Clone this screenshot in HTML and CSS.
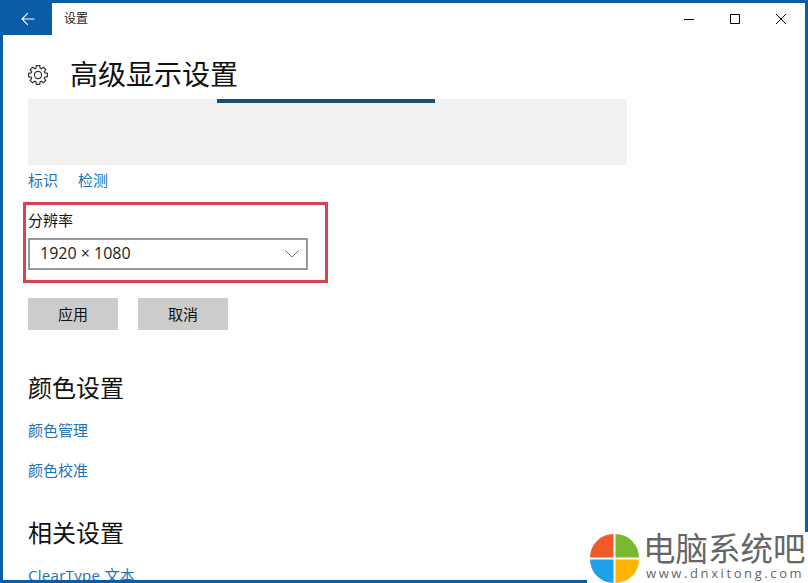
FILE: index.html
```html
<!DOCTYPE html>
<html lang="zh-CN">
<head>
    <meta charset="UTF-8">
    <title>设置</title>
    <link rel="stylesheet" href="styles.css">
</head>
<body>
    <div class="window">
        <div class="titlebar">
            <div class="back">
                <svg width="14" height="14" viewBox="0 0 14 14" fill="none" stroke="#fff" stroke-width="1.1"><path d="M1 7H13.5M6.8 1.2 1 7l5.8 5.8"/></svg>
            </div>
            <div class="title">设置</div>
            <div class="controls">
                <svg width="12" height="12" viewBox="0 0 12 12" fill="none" stroke="#000"><path d="M1 6.5H11"/></svg>
                <svg width="12" height="12" viewBox="0 0 12 12" fill="none" stroke="#000"><path d="M1.5 1.5H10.5V10.5H1.5Z"/></svg>
                <svg width="12" height="12" viewBox="0 0 12 12" fill="none" stroke="#000"><path d="M1 1 11 11M11 1 1 11"/></svg>
            </div>
        </div>
        <div class="content">
            <div class="page-head">
                <svg class="gear" width="20" height="20" viewBox="0 0 20 20" fill="none" stroke="#333" stroke-width="1.2">
                    <polygon points="7.84,3.34 8.35,.65 11.65,.65 12.16,3.34 13.18,3.76 15.45,2.22 17.78,4.55 16.24,6.82 16.66,7.84 19.35,8.35 19.35,11.65 16.66,12.16 16.24,13.18 17.78,15.45 15.45,17.78 13.18,16.24 12.16,16.66 11.65,19.35 8.35,19.35 7.84,16.66 6.82,16.24 4.55,17.78 2.22,15.45 3.76,13.18 3.34,12.16 .65,11.65 .65,8.35 3.34,7.84 3.76,6.82 2.22,4.55 4.55,2.22 6.82,3.76"/>
                    <circle cx="10" cy="10" r="3.6"/>
                </svg>
                <h1>高级显示设置</h1>
            </div>
            <div class="preview"><div class="monitor"></div></div>
            <div class="link-row">
                <a>标识</a>
                <a>检测</a>
            </div>
            <div class="resolution">
                <label>分辨率</label>
                <div class="select">
                    <span class="select-value">1920 × 1080</span>
                    <svg width="14" height="8" viewBox="0 0 14 8" fill="none" stroke="#777"><path d="M.5.5 7 7 13.5.5"/></svg>
                </div>
                <div class="highlight"></div>
            </div>
            <div class="buttons">
                <button>应用</button>
                <button>取消</button>
            </div>
            <h2>颜色设置</h2>
            <a class="link">颜色管理</a>
            <a class="link">颜色校准</a>
            <h2 class="related">相关设置</h2>
            <a class="link link-wide">ClearType 文本</a>
        </div>
    </div>
    <div class="watermark">
        <svg class="logo" width="49" height="49" viewBox="0 0 50 50">
            <path fill="#f05a28" d="M24 0V24H0A24 24 0 0 1 24 0Z"/>
            <path fill="#7cb82f" d="M26 0A24 24 0 0 1 50 24H26Z"/>
            <path fill="#1ea1e8" d="M0 26H24V50A24 24 0 0 1 0 26Z"/>
            <path fill="#ffb400" d="M26 26H50A24 24 0 0 1 26 50Z"/>
        </svg>
        <div class="brand">
            <div class="brand-name">电脑系统吧</div>
            <div class="brand-url">www.dnxitong.com</div>
        </div>
    </div>
</body>
</html>
```

FILE: styles.css
```css
html, body {
    margin: 0;
    padding: 0;
    height: 100%;
}
body {
    font-family: "Open Sans", "Noto Sans CJK SC", sans-serif;
    background: #fff;
    overflow: hidden;
    position: relative;
}
.window {
    box-sizing: border-box;
    height: 583px;
    border: 3px solid #0a5ca6;
    overflow: hidden;
    background: #fff;
}
.titlebar {
    display: flex;
    align-items: center;
    height: 32px;
}
.back {
    width: 49px;
    height: 32px;
    background: #0a5ca6;
    display: flex;
    align-items: center;
    justify-content: center;
}
.title {
    margin-left: 12px;
    padding-bottom: 2px;
    font-size: 12px;
    color: #222;
}
.controls {
    margin-left: auto;
    margin-right: 18px;
    display: flex;
    gap: 34px;
}
.content {
    padding-left: 25px;
}
.page-head {
    box-sizing: border-box;
    display: flex;
    align-items: center;
    height: 64px;
    padding-top: 16px;
    gap: 22px;
}
h1 {
    margin: 0 0 2px;
    font-size: 28px;
    line-height: 40px;
    font-weight: 400;
    color: #111;
}
.preview {
    width: 599px;
    height: 66px;
    background: #f2f2f2;
}
.monitor {
    margin-left: 189px;
    width: 218px;
    height: 4px;
    background: #1a4f78;
}
.link-row {
    display: flex;
    gap: 20px;
    margin-top: 4px;
    height: 22px;
    line-height: 22px;
}
a {
    color: #1a72b8;
    font-size: 15px;
}
.resolution {
    position: relative;
    margin-top: 18px;
    width: 280px;
}
label {
    display: block;
    font-size: 15px;
    line-height: 22px;
    color: #111;
}
.select {
    box-sizing: border-box;
    margin-top: 7px;
    height: 32px;
    border: 2px solid #999;
    padding: 0 7px 0 10px;
    display: flex;
    align-items: center;
    justify-content: space-between;
    font-size: 16px;
    color: #222;
}
.select-value {
    margin-bottom: 2px;
}
.highlight {
    position: absolute;
    left: -5px;
    top: -7px;
    width: 299px;
    height: 75px;
    border: 3px solid #d8434f;
}
.buttons {
    display: flex;
    gap: 20px;
    margin-top: 28px;
}
button {
    width: 90px;
    height: 32px;
    border: none;
    padding: 0 0 2px;
    background: #ccc;
    font-family: inherit;
    font-size: 15px;
    color: #111;
}
h2 {
    margin: 40px 0 0;
    font-size: 24px;
    line-height: 36px;
    font-weight: 400;
    color: #111;
}
.related {
    margin-top: 32px;
}
.link {
    display: block;
    margin-top: 11px;
    line-height: 26px;
    height: 26px;
}
.link + .link {
    margin-top: 14px;
}
.link-wide {
    letter-spacing: .3px;
}
.watermark {
    box-sizing: border-box;
    position: absolute;
    right: 0;
    bottom: 0;
    width: 221px;
    height: 51px;
    padding-left: 3px;
    background: #fff;
    display: flex;
    gap: 4px;
}
.logo {
    margin-top: 2px;
}
.brand {
    color: #666;
}
.brand-name {
    font-size: 32.5px;
    line-height: 34px;
    white-space: nowrap;
}
.brand-url {
    padding-left: 3px;
    font-size: 13px;
    line-height: 14px;
    letter-spacing: 2.6px;
    white-space: nowrap;
}
```
